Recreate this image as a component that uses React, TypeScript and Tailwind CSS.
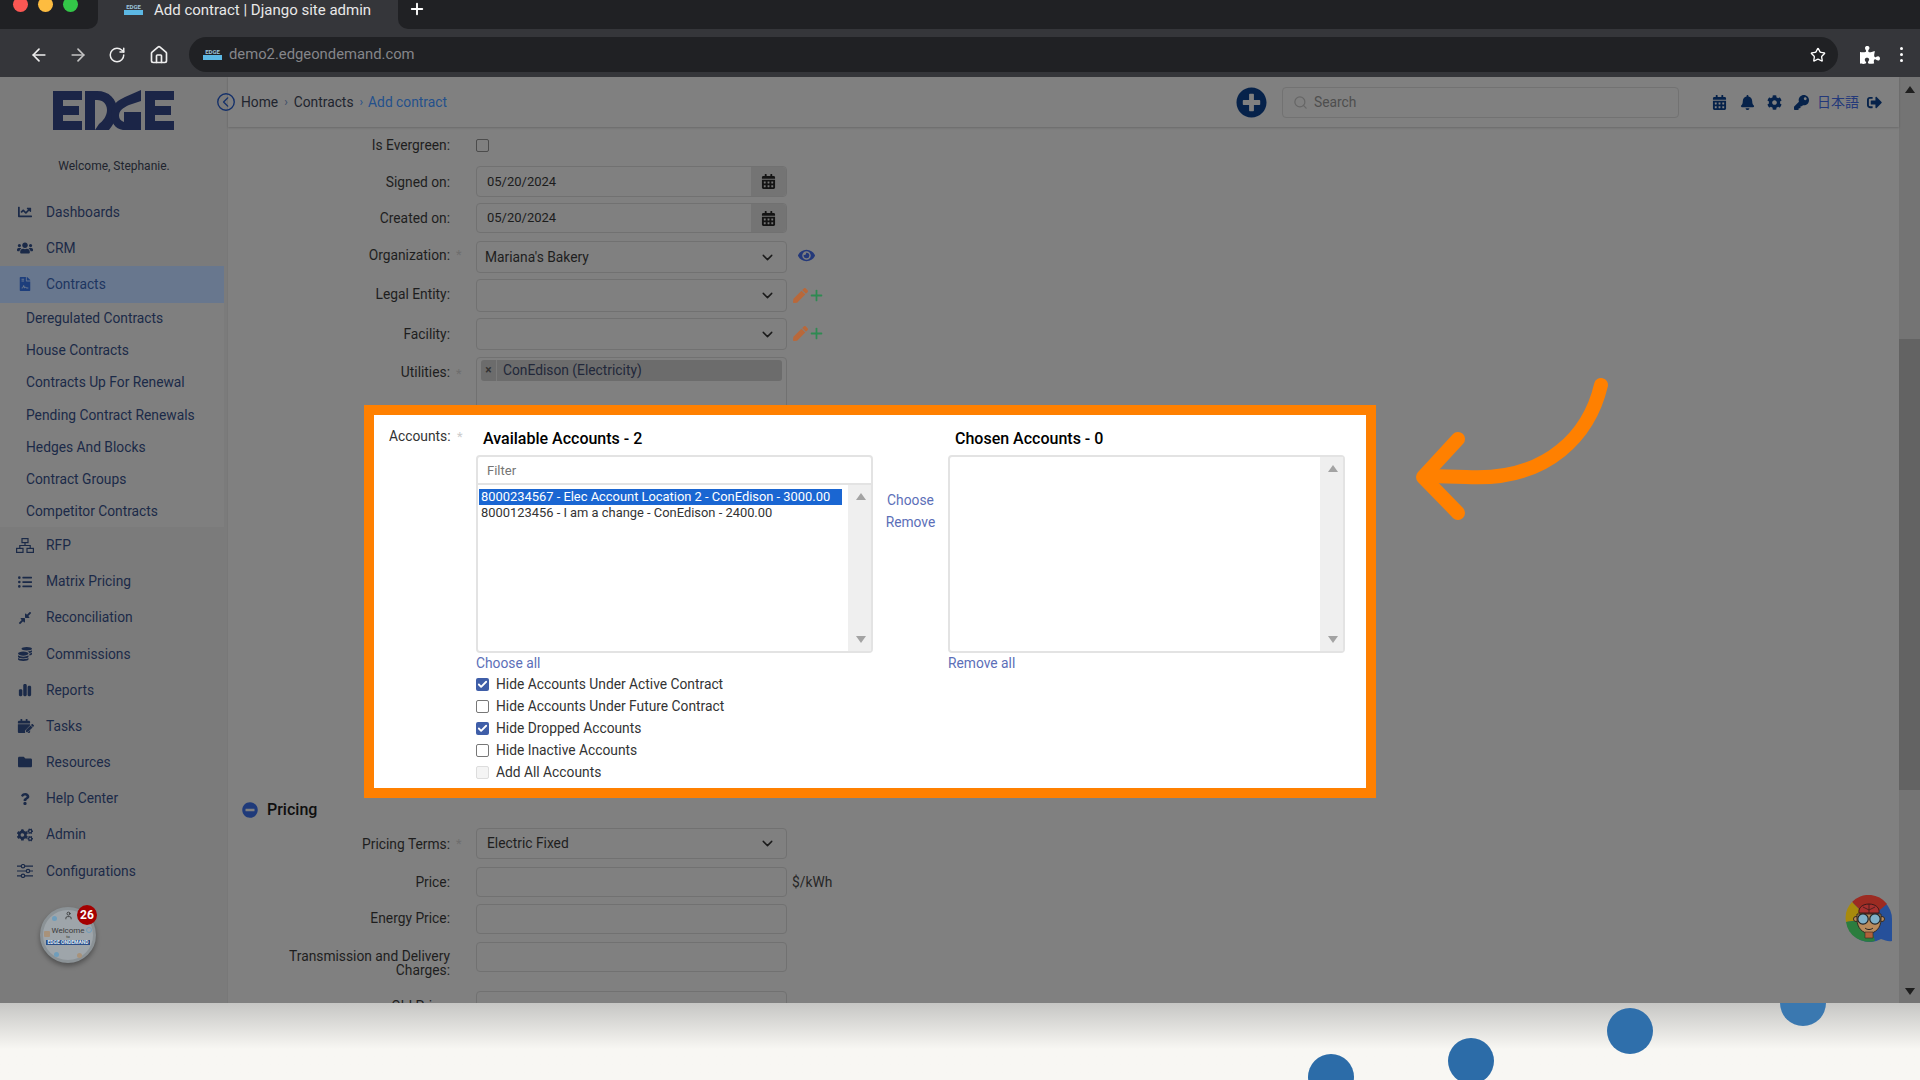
import type { ReactNode } from "react";
import { ArrowLeft, ArrowRight, Check, ChevronDown, Home, Plus, RotateCw, Search, Star, User } from "lucide-react";
import {
    FaCalendar, FaCalendarAlt, FaChartLine, FaCog, FaCogs, FaCoins, FaCompressAlt, FaEye, FaFileContract, FaFolder, FaKey,
    FaBell, FaListUl, FaMinusCircle, FaPen, FaPlusCircle, FaPuzzlePiece, FaQuestion, FaSignOutAlt, FaUsers,
} from "react-icons/fa";
import { FaChartSimple } from "react-icons/fa6";
import { IoChevronBackCircleOutline } from "react-icons/io5";

const RfpIcon = () => (
    <svg width="18" height="15" viewBox="0 0 18 15" fill="none" stroke="currentColor" strokeWidth="1.2">
        <rect x="6" y="0.6" width="6" height="4" />
        <rect x="0.6" y="10.4" width="6.4" height="4" />
        <rect x="11" y="10.4" width="6.4" height="4" />
        <path d="M9 4.6V7.5M3.8 10.4V7.5H14.2V10.4" />
    </svg>
);

const TasksIcon = () => (
    <span className="relative block w-[17px] h-[14px]">
        <FaCalendar size={14} className="absolute left-0 top-0" />
        <FaPen size={8} className="absolute right-0 bottom-[1px] text-[#7b7b7b] scale-125" />
        <FaPen size={8} className="absolute right-0 bottom-[1px]" />
    </span>
);

const ConfigIcon = () => (
    <svg width="16" height="14" viewBox="0 0 16 14" fill="none" stroke="currentColor" strokeWidth="1.2">
        <path d="M0 2.2H4M8 2.2H16M0 7H9M13 7H16M0 11.8H4M8 11.8H16" />
        <circle cx="6" cy="2.2" r="1.7" />
        <circle cx="11" cy="7" r="1.7" />
        <circle cx="6" cy="11.8" r="1.7" />
    </svg>
);

const topNav = [
    { name: "Dashboards", icon: <FaChartLine size={14} /> },
    { name: "CRM", icon: <FaUsers size={16} /> },
];

const subNav = [
    "Deregulated Contracts",
    "House Contracts",
    "Contracts Up For Renewal",
    "Pending Contract Renewals",
    "Hedges And Blocks",
    "Contract Groups",
    "Competitor Contracts",
];

const bottomNav = [
    { name: "RFP", icon: <RfpIcon /> },
    { name: "Matrix Pricing", icon: <FaListUl size={14} /> },
    { name: "Reconciliation", icon: <FaCompressAlt size={14} /> },
    { name: "Commissions", icon: <FaCoins size={14} /> },
    { name: "Reports", icon: <FaChartSimple size={14} /> },
    { name: "Tasks", icon: <TasksIcon /> },
    { name: "Resources", icon: <FaFolder size={14} /> },
    { name: "Help Center", icon: <FaQuestion size={12} /> },
    { name: "Admin", icon: <FaCogs size={16} /> },
    { name: "Configurations", icon: <ConfigIcon /> },
];

const filters = [
    { label: "Hide Accounts Under Active Contract", checked: true },
    { label: "Hide Accounts Under Future Contract" },
    { label: "Hide Dropped Accounts", checked: true },
    { label: "Hide Inactive Accounts" },
    { label: "Add All Accounts", disabled: true },
];

const Tri = ({ down, className }: { down?: boolean; className?: string }) => (
    <svg width="10" height="7" viewBox="0 0 10 7" className={className}>
        <polygon points={down ? "0,0 10,0 5,7" : "0,7 10,7 5,0"} fill="currentColor" />
    </svg>
);

const Favicon = () => (
    <div className="flex flex-col w-[19px] h-[11px] items-center leading-none shrink-0">
        <span className="text-[6px] font-bold text-[#9cc4dc] leading-[6px]">EDGE</span>
        <span className="w-full h-[5px] bg-[#5cb8e4]" />
    </div>
);

const BrowserChrome = () => (
    <div className="h-[77px] shrink-0 bg-[#35363a]">
        <div className="flex h-[29px]">
            <div className="flex gap-[10px] pl-[13px] w-[98px] h-full bg-[#202124] rounded-br-[10px] overflow-hidden">
                <span className="-mt-[3px] rounded-full size-[15px] bg-[#fc5753]" />
                <span className="-mt-[3px] rounded-full size-[15px] bg-[#fdbc40]" />
                <span className="-mt-[3px] rounded-full size-[15px] bg-[#33c748]" />
            </div>
            <div className="flex items-start gap-[11px] pl-[26px] pt-[1px] w-[300px]">
                <div className="mt-[3px]"><Favicon /></div>
                <span className="text-[#e8e8e8] text-[15px] leading-[18px]">Add contract | Django site admin</span>
            </div>
            <div className="flex-1 bg-[#202124] rounded-bl-[10px] pl-[10px] text-white">
                <Plus size={18} strokeWidth={2.5} />
            </div>
        </div>
        <div className="flex items-center pt-[3px] h-[48px] text-[#eeeeee]">
            <div className="flex items-center w-[189px]">
                <ArrowLeft size={20} className="ml-[29px]" />
                <ArrowRight size={20} className="ml-[19px] text-[#c4c4c4]" />
                <RotateCw size={18} className="ml-[20px]" />
                <Home size={20} className="ml-[23px]" />
            </div>
            <div className="flex items-center pl-[14px] pr-[12px] w-[1649px] h-[35px] bg-[#202124] rounded-full">
                <Favicon />
                <span className="ml-[7px] text-[#85868a] text-[14.8px]">demo2.edgeondemand.com</span>
                <Star size={16} className="ml-auto text-white" />
            </div>
            <FaPuzzlePiece size={20} className="ml-[22px] text-white" />
            <div className="flex flex-col gap-[3px] ml-[20px]">
                <span className="rounded-full size-[3px] bg-white" />
                <span className="rounded-full size-[3px] bg-white" />
                <span className="rounded-full size-[3px] bg-white" />
            </div>
        </div>
    </div>
);

const Logo = () => (
    <svg width="122" height="40" viewBox="0 0 122 40" className="ml-[53px] text-[#1b2547]" fill="currentColor">
        <path d="M0 1H29V10H10V16H26V25H10V31H29V40H0Z" />
        <path d="M32 1H44C56 1 64 9 64 20C64 29 60 35 56 40H42L46 34C50 31 54 26 54 20C54 14 50 10 44 10H42V40H32Z" />
        <path d="M88 0V11L76 15C70 18 66 20 66 26C66 29 68 31 71 32V22H88V40H70C62 39 58 32 58 25C58 14 66 10 72 7Z" />
        <path d="M92 1H121V10H102V16H118V25H102V31H121V40H92Z" />
    </svg>
);

const NavRow = ({ name, icon, active }: { name: string; icon: ReactNode; active?: boolean }) => (
    <div className={`flex items-center h-[36.2px] w-[224px] ${active ? "bg-[#68778e] text-[#1d3560]" : ""}`}>
        <span className="flex justify-center w-[50px] shrink-0">{icon}</span>
        <span className="-ml-[4px] text-[13.8px]">{name}</span>
    </div>
);

const WelcomeBadge = () => (
    <div className="relative mt-[18px] ml-[40px] size-[56px] rounded-full bg-[#9ea5aa] border-[3px] border-[#8b9296] shadow-[0_3px_5px_rgba(0,0,0,0.35)] flex flex-col items-center justify-center leading-none">
        <User size={9} className="absolute top-[1px] text-[#2a2a2a]" />
        <span className="absolute left-[1px] top-[21px] size-[6px] rounded-[1px] bg-[#a8927a]" />
        <span className="absolute right-[1px] top-[17px] size-[6px] rounded-full border border-[#6f9dbb]" />
        <span className="absolute left-[9px] top-[6px] size-[5px] rounded-full bg-[#6f9dbb]" />
        <span className="absolute right-[11px] bottom-[2px] size-[5px] rounded-full bg-[#a8927a]" />
        <span className="absolute left-[11px] bottom-[3px] size-[5px] rounded-full bg-[#6f9dbb]" />
        <span className="mt-[2px] text-[8px] text-[#3a3a3a]">Welcome</span>
        <span className="text-[4px] text-[#333333]">to</span>
        <span className="mt-[1px] px-[1px] bg-[#2c4f88] text-[#dfe8f2] text-[5px] font-bold whitespace-nowrap">EDGE ONDEMAND</span>
        <span className="absolute -top-[5px] -right-[4px] flex justify-center items-center rounded-full size-[20px] bg-[#a40000] text-white text-[12px] font-bold">26</span>
    </div>
);

const Sidebar = () => (
    <aside className="flex flex-col w-[228px] shrink-0 pt-[13px] text-[#1b2a48] bg-[#7b7b7b] border-r border-[#787878]">
        <Logo />
        <p className="mt-[28px] w-[228px] text-[#20242e] text-center text-[12px] leading-[16px]">Welcome, Stephanie.</p>
        <nav className="mt-[20px]">
            {topNav.map((item) => <NavRow key={item.name} {...item} />)}
            <NavRow name="Contracts" icon={<FaFileContract size={14} className="text-[#1d3e7c]" />} active />
            <div className="w-[224px] bg-[#7f7f7f]">
                {subNav.map((name) => (
                    <div key={name} className="flex items-center pl-[26px] h-[32.1px] text-[13.8px]">{name}</div>
                ))}
            </div>
            {bottomNav.map((item) => <NavRow key={item.name} {...item} />)}
        </nav>
        <WelcomeBadge />
    </aside>
);

const TopBar = () => (
    <header className="flex items-center shrink-0 h-[50px] pr-[17px] bg-[#808080] shadow-[0_1px_2px_rgba(0,0,0,0.18)] text-[13.8px] text-[#20242e] relative z-10">
        <IoChevronBackCircleOutline size={22} className="-ml-[13px] text-[#14306a]" />
        <span className="ml-[4px]">Home</span>
        <span className="ml-[6px] text-[#3c4c68] text-[12px]">›</span>
        <span className="ml-[6px]">Contracts</span>
        <span className="ml-[6px] text-[#24508c] text-[12px]">›</span>
        <span className="ml-[5px] text-[#24508c]">Add contract</span>
        <FaPlusCircle size={31} className="ml-auto text-[#06224a]" />
        <div className="flex items-center ml-[15px] w-[397px] h-[31px] pl-[10px] border border-[#727272] rounded-[4px] text-[#4e4e4e]">
            <Search size={15} className="text-[#666666]" />
            <span className="ml-[6px]">Search</span>
        </div>
        <div className="flex items-center text-[#06224a]">
            <FaCalendarAlt size={15} className="ml-[33px]" />
            <FaBell size={15} className="ml-[13px]" />
            <FaCog size={15} className="ml-[12px]" />
            <FaKey size={15} className="ml-[12px]" />
            <span className="ml-[8px] text-[#24397a] text-[14px] font-['Roboto','Noto_Sans_CJK_JP',sans-serif]">日本語</span>
            <FaSignOutAlt size={15} className="ml-[8px]" />
        </div>
    </header>
);

const Box = ({ className, children }: { className: string; children?: ReactNode }) => (
    <div className={`flex items-center w-[311px] border border-[#717171] rounded-[4px] ${className}`}>{children}</div>
);

const Row = ({ label, required, className, labelClass, starClass, children }: { label: string; required?: boolean; className: string; labelClass?: string; starClass?: string; children: ReactNode }) => (
    <div className={`flex items-center shrink-0 ${className}`}>
        <div className={`w-[222px] text-right text-[13.8px] leading-[14px] text-[#1e1e1e] ${labelClass ?? ""}`}>{label}</div>
        <div className={`w-[26px] pl-[6px] text-[13px] text-[#6e6e6e] ${starClass ?? ""}`}>{required ? "*" : ""}</div>
        {children}
    </div>
);

const DateBox = ({ className }: { className: string }) => (
    <Box className={`${className} text-[13px] text-[#1c1c1c]`}>
        <span className="pl-[10px] flex-1">05/20/2024</span>
        <span className="flex justify-center items-center w-[35px] h-full bg-[#747474] rounded-r-[4px] text-[#141414]">
            <FaCalendarAlt size={15} />
        </span>
    </Box>
);

const SelectBox = ({ value, h, inset }: { value?: string; h: string; inset: string }) => (
    <Box className={`${h} text-[13.8px] text-[#1e1e1e]`}>
        <span className={`flex-1 ${inset}`}>{value}</span>
        <ChevronDown size={17} className="mr-[10px] text-[#1a1a1a]" />
    </Box>
);

const EditIcons = () => (
    <div className="flex items-center ml-[6px] -mt-[1px]">
        <FaPen size={15} className="text-[#b9683a]" />
        <Plus size={17} strokeWidth={2.5} className="text-[#2f8a52]" />
    </div>
);

const ListBox = ({ children }: { children?: ReactNode }) => (
    <div className="relative flex-1 min-h-0 overflow-hidden">
        {children}
        <div className="absolute top-0 right-0 bottom-0 flex flex-col justify-between items-center pl-[2px] py-[8px] w-[23px] bg-[#efefef] text-[#a3a3a3]">
            <Tri />
            <Tri down />
        </div>
    </div>
);

const AccountsBox = () => (
    <section className="flex shrink-0 ml-[136px] w-[1012px] h-[393px] bg-white border-[10px] border-[#ff8000] text-[13.8px]">
        <div className="w-[102px] shrink-0 pl-[15px] pt-[12px] text-[#333333] leading-[18px]">
            Accounts: <span className="text-[#cccccc] text-[13px] ml-[3px]">*</span>
        </div>
        <div className="w-[397px] shrink-0">
            <h3 className="pl-[7px] pt-[14px] h-[40px] text-[16px] leading-[20px] font-medium text-black">Available Accounts - 2</h3>
            <div className="flex flex-col h-[198px] border-2 border-[#e3e3e3] rounded-[4px]">
                <div className="pl-[9px] h-[28px] shrink-0 leading-[28px] border-b-2 border-[#e3e3e3] text-[13px] text-[#757575]">Filter</div>
                <ListBox>
                    <div className="pt-[3.5px] pl-[1px] w-[364px] text-[12.9px] leading-[16px] text-[#333333] whitespace-nowrap">
                        <div className="pl-[2px] bg-[#1a66d2] text-white">8000234567 - Elec Account Location 2 - ConEdison - 3000.00</div>
                        <div className="pl-[2px]">8000123456 - I am a change - ConEdison - 2400.00</div>
                    </div>
                </ListBox>
            </div>
            <a className="block h-[19px] leading-[20px] text-[#5c6fb8]">Choose all</a>
            <div className="mt-[1px]">
                {filters.map(({ label, checked, disabled }) => (
                    <div key={label} className="flex items-center h-[22px] text-[#333333]">
                        <span className={`flex justify-center items-center rounded-[2px] size-[13px] ${checked ? "bg-[#3f5ea8] text-white" : disabled ? "bg-[#f4f4f4] border border-[#dddddd]" : "border border-[#777777]"}`}>
                            {checked && <Check size={11} strokeWidth={4} />}
                        </span>
                        <span className="ml-[7px]">{label}</span>
                    </div>
                ))}
            </div>
        </div>
        <div className="flex flex-col items-center pt-[74px] w-[75px] shrink-0 text-[#5c6fb8] leading-[22px]">
            <a>Choose</a>
            <a>Remove</a>
        </div>
        <div className="w-[397px] shrink-0">
            <h3 className="pl-[7px] pt-[14px] h-[40px] text-[16px] leading-[20px] font-medium text-black">Chosen Accounts - 0</h3>
            <div className="flex flex-col h-[198px] border-2 border-[#e3e3e3] rounded-[4px]">
                <ListBox />
            </div>
            <a className="block h-[20px] leading-[20px] text-[#5c6fb8]">Remove all</a>
        </div>
    </section>
);

const FormArea = () => (
    <div className="flex flex-col min-h-0 overflow-hidden">
        <Row label="Is Evergreen:" className="mt-[3px] h-[30px]">
            <span className="size-[13px] rounded-[2px] border border-[#4c4c4c]" />
        </Row>
        <Row label="Signed on:" className="mt-[6px] h-[31px]"><DateBox className="h-[31px]" /></Row>
        <Row label="Created on:" className="mt-[6px] h-[30px]"><DateBox className="h-[30px]" /></Row>
        <Row label="Organization:" required className="mt-[8px] h-[32px]" labelClass="-mt-[4px]" starClass="-mt-[4px]">
            <SelectBox value="Mariana's Bakery" h="h-[32px]" inset="pl-[8px]" />
            <FaEye size={17} className="ml-[11px] -mt-[4px] text-[#24397a]" />
        </Row>
        <Row label="Legal Entity:" className="mt-[6px] h-[33px]" labelClass="-mt-[3px]">
            <SelectBox h="h-[33px]" inset="pl-[8px]" />
            <EditIcons />
        </Row>
        <Row label="Facility:" className="mt-[6px] h-[32px]">
            <SelectBox h="h-[32px]" inset="pl-[8px]" />
            <EditIcons />
        </Row>
        <Row label="Utilities:" required className="mt-[7px] h-[48px] items-start" labelClass="mt-[8px]" starClass="mt-[7px]">
            <Box className="h-[60px] items-start pl-[4px] pt-[2px]">
                <div className="flex items-center w-[301px] h-[21px] bg-[#6c6c6c] rounded-[3px] text-[13.8px] text-[#22283a]">
                    <span className="flex justify-center w-[16px] h-full leading-[21px] border-r border-[#7a7a7a] text-[#333333] font-bold text-[12px]">×</span>
                    <span className="ml-[6px]">ConEdison (Electricity)</span>
                </div>
            </Box>
        </Row>
        <div className="relative z-10"><AccountsBox /></div>
        <div className="flex items-center shrink-0 pl-[14px] pt-[2px] h-[22px] text-[#0f0f0f]">
            <FaMinusCircle size={16} className="text-[#1f3a7a]" />
            <span className="ml-[9px] text-[16px] font-medium">Pricing</span>
        </div>
        <Row label="Pricing Terms:" required className="mt-[8px] h-[31px]">
            <SelectBox value="Electric Fixed" h="h-[31px]" inset="pl-[10px]" />
        </Row>
        <Row label="Price:" className="mt-[8px] h-[30px]">
            <Box className="h-[30px]" />
            <span className="ml-[5px] text-[13.8px] text-[#262626]">$/kWh</span>
        </Row>
        <Row label="Energy Price:" className="mt-[7px] h-[30px]" labelClass="-mt-[2px]"><Box className="h-[30px]" /></Row>
        <Row label="Transmission and Delivery Charges:" className="mt-[8px] h-[30px] items-start" labelClass="mt-[7px] pl-[30px]">
            <Box className="h-[30px]" />
        </Row>
        <Row label="Old Price:" className="mt-[19px] h-[30px]"><Box className="h-[30px]" /></Row>
    </div>
);

const PageScrollbar = () => (
    <div className="flex flex-col items-center w-[21px] shrink-0 bg-[#747474] text-[#1e1e1e]">
        <Tri className="mt-[9px]" />
        <div className="mt-[246px] w-full h-[451px] bg-[#636363]" />
        <Tri down className="mt-[198px]" />
    </div>
);

const HelperBot = () => (
    <svg width="48" height="50" viewBox="0 0 48 50" className="absolute top-[895px] left-[1845px]">
        <path d="M24 1A23 23 0 0 1 47 24V46C43 47 40 45 36 44A23 23 0 1 1 24 1Z" fill="#26509a" />
        <path d="M24 24L7 7A23 23 0 0 1 42 9Z" fill="#9c2b22" />
        <path d="M24 24L7 7A23 23 0 0 0 1 27Z" fill="#a88a0c" />
        <path d="M24 24L1 27A23 23 0 0 0 30 46Z" fill="#2b7d3e" />
        <circle cx="11" cy="24" r="2.5" fill="#b98b5c" stroke="#332a22" />
        <circle cx="37" cy="24" r="2.5" fill="#b98b5c" stroke="#332a22" />
        <path d="M12 19H36V24C36 43 12 43 12 24Z" fill="#b98b5c" stroke="#332a22" />
        <path d="M20 37H28V43H20Z" fill="#b0623a" stroke="#332a22" strokeWidth="0.6" />
        <path d="M14 18C12 6 36 6 34 18Z" fill="#a8302e" stroke="#3a1a1a" />
        <path d="M24 9V18M18 12L24 15L30 12" fill="none" stroke="#3a1a1a" strokeWidth="0.8" />
        <circle cx="18" cy="24" r="5.2" fill="#7fb0c8" stroke="#222" strokeWidth="1.2" />
        <circle cx="30" cy="24" r="5.2" fill="#7fb0c8" stroke="#222" strokeWidth="1.2" />
        <path d="M20 33C22 35 26 35 28 33" fill="none" stroke="#222" />
    </svg>
);

const FooterBand = () => (
    <div className="relative flex-1 overflow-hidden bg-linear-to-b from-[#c6c6c4] to-[#f8f7f3] to-60%">
        <span className="absolute top-[-23px] left-[1780px] rounded-full size-[46px] bg-[#3a78b0]" />
        <span className="absolute top-[5px] left-[1607px] rounded-full size-[46px] bg-[#2f6fab]" />
        <span className="absolute top-[35px] left-[1448px] rounded-full size-[46px] bg-[#2c6ca8]" />
        <span className="absolute top-[51px] left-[1308px] rounded-full size-[46px] bg-[#2c6ca8]" />
    </div>
);

export default function App() {
    return (
        <div className="relative flex flex-col w-[1920px] h-[1080px] overflow-hidden font-['Roboto',sans-serif]">
            <BrowserChrome />
            <div className="flex h-[926px] shrink-0 bg-[#808080] overflow-hidden">
                <Sidebar />
                <main className="flex flex-col flex-1 min-w-0">
                    <TopBar />
                    <FormArea />
                </main>
                <PageScrollbar />
            </div>
            <FooterBand />
            <HelperBot />
            <svg width="220" height="160" viewBox="0 0 220 160" className="absolute top-[370px] left-[1400px] text-[#ff8000]" fill="none" stroke="currentColor" strokeWidth="14" strokeLinecap="round" strokeLinejoin="round">
                <path d="M201 15C190 62 150 112 66 107L28 106" />
                <path d="M58 69L23 107L58 143" />
            </svg>
        </div>
    );
}
